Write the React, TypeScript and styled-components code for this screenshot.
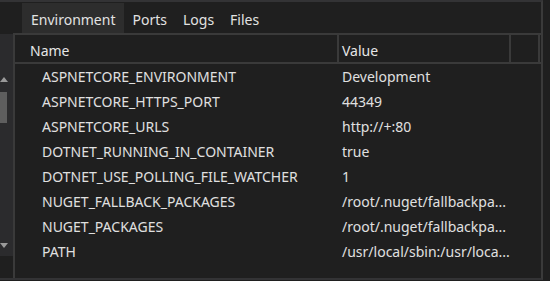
import React from "react";
import styled, { createGlobalStyle } from "styled-components";

const Global = createGlobalStyle`
  html, body { margin: 0; padding: 0; background: #1f1f1f; }
  body { font-family: "Noto Sans", "Open Sans", sans-serif; }
`;

const Root = styled.div`
  width: 550px;
  height: 281px;
  background: #1f1f1f;
  display: flex;
  overflow: hidden;
`;

const Frame = styled.div`
  width: 543px;
  height: 280px;
  box-sizing: border-box;
  border-top: 2px solid #333335;
  border-right: 2px solid #3a3a3a;
  border-bottom: 2px solid #333335;
  display: flex;
  flex-direction: column;
`;

const TabBar = styled.div`
  height: 31px;
  padding-left: 22px;
  display: flex;
  align-items: flex-end;
`;

const Tab = styled.div<{ $active?: boolean }>`
  height: 30px;
  box-sizing: border-box;
  padding: 2px ${(p) => (p.$active ? "9px" : "8px")} 0;
  display: flex;
  align-items: center;
  font-size: 14px;
  color: #e2e2e2;
  background: ${(p) => (p.$active ? "#2d2d2d" : "transparent")};
`;

const Content = styled.div`
  flex: 1;
  display: flex;
  min-height: 0;
`;

const Rail = styled.div`
  width: 13px;
  display: flex;
  flex-direction: column;
`;

const ScrollTrack = styled.div`
  height: 222px;
  margin-top: 1px;
  background: #2b2b2d;
  position: relative;
`;

const Arrow = styled.div<{ $down?: boolean }>`
  position: absolute;
  left: 0;
  ${(p) => (p.$down ? "top: 209px;" : "top: 43px;")}
  width: 0;
  height: 0;
  border-left: 4px solid transparent;
  border-right: 4px solid transparent;
  ${(p) =>
    p.$down
      ? "border-top: 5px solid #9a9a9a;"
      : "border-bottom: 5px solid #9a9a9a;"}
`;

const Thumb = styled.div`
  position: absolute;
  left: 0;
  top: 58px;
  width: 7px;
  height: 31px;
  background: #5e5e5e;
`;

const Panel = styled.div`
  flex: 1;
  border-left: 2px solid #3a3a3a;
  border-top: 2px solid #3a3a3a;
  display: flex;
  flex-direction: column;
`;

const HeaderRow = styled.div`
  height: 27px;
  display: flex;
  border-bottom: 2px solid #3a3a3a;
`;

const HeaderCell = styled.div<{ $w: number; $pl: number }>`
  width: ${(p) => p.$w}px;
  box-sizing: border-box;
  padding-left: ${(p) => p.$pl}px;
  padding-top: 4px;
  display: flex;
  align-items: center;
  font-size: 14px;
  color: #e6e6e6;
  border-right: 2px solid #3a3a3a;
`;

const Row = styled.div`
  height: 25px;
  display: flex;
  align-items: center;
  font-size: 14px;
  color: #e0e0e0;
`;

const NameCell = styled.div`
  width: 324px;
  box-sizing: border-box;
  padding-left: 27px;
  white-space: nowrap;
`;

const ValueCell = styled.div`
  width: 172px;
  box-sizing: border-box;
  padding-left: 3px;
  white-space: nowrap;
  overflow: hidden;
`;

const rows: [string, string][] = [
  ["ASPNETCORE_ENVIRONMENT", "Development"],
  ["ASPNETCORE_HTTPS_PORT", "44349"],
  ["ASPNETCORE_URLS", "http://+:80"],
  ["DOTNET_RUNNING_IN_CONTAINER", "true"],
  ["DOTNET_USE_POLLING_FILE_WATCHER", "1"],
  ["NUGET_FALLBACK_PACKAGES", "/root/.nuget/fallbackpa..."],
  ["NUGET_PACKAGES", "/root/.nuget/fallbackpa..."],
  ["PATH", "/usr/local/sbin:/usr/loca..."],
];

export default function App() {
  return (
    <Root>
      <Global />
      <Frame>
        <TabBar>
          <Tab $active>Environment</Tab>
          <Tab>Ports</Tab>
          <Tab>Logs</Tab>
          <Tab>Files</Tab>
        </TabBar>
        <Content>
          <Rail>
            <ScrollTrack>
              <Arrow />
              <Thumb />
              <Arrow $down />
            </ScrollTrack>
          </Rail>
          <Panel>
            <HeaderRow>
              <HeaderCell $w={324} $pl={15}>Name</HeaderCell>
              <HeaderCell $w={172} $pl={3}>Value</HeaderCell>
              <HeaderCell $w={29} $pl={0} />
            </HeaderRow>
            {rows.map(([n, v]) => (
              <Row key={n}>
                <NameCell>{n}</NameCell>
                <ValueCell>{v}</ValueCell>
              </Row>
            ))}
          </Panel>
        </Content>
      </Frame>
    </Root>
  );
}
